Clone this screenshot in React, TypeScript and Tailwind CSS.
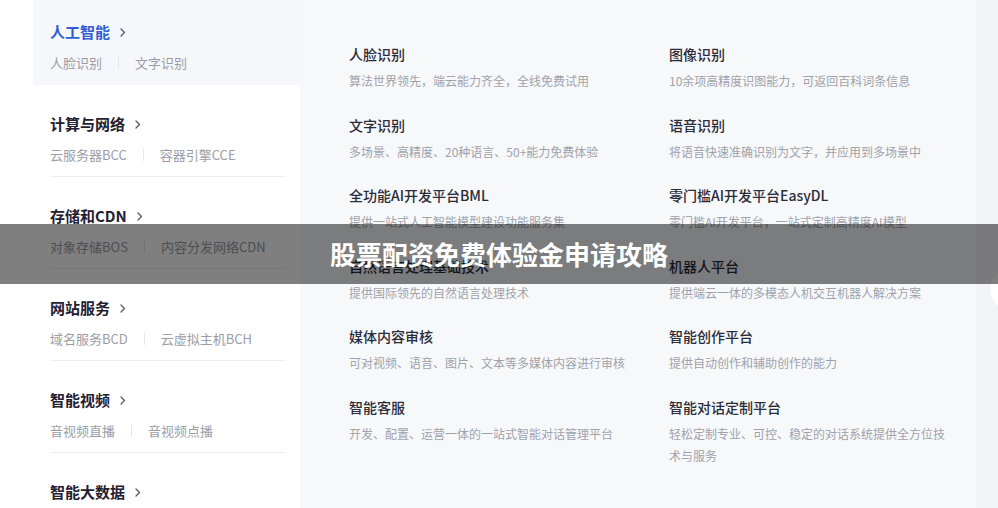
import { Fragment } from 'react';

type NavItem = { title: string; links: string[] };

const NAV: NavItem[] = [
  { title: '人工智能', links: ['人脸识别', '文字识别'] },
  { title: '计算与网络', links: ['云服务器BCC', '容器引擎CCE'] },
  { title: '存储和CDN', links: ['对象存储BOS', '内容分发网络CDN'] },
  { title: '网站服务', links: ['域名服务BCD', '云虚拟主机BCH'] },
  { title: '智能视频', links: ['音视频直播', '音视频点播'] },
  { title: '智能大数据', links: [] },
];

const PRODUCTS: { name: string; desc: string }[] = [
  { name: '人脸识别', desc: '算法世界领先，端云能力齐全，全线免费试用' },
  { name: '图像识别', desc: '10余项高精度识图能力，可返回百科词条信息' },
  { name: '文字识别', desc: '多场景、高精度、20种语言、50+能力免费体验' },
  { name: '语音识别', desc: '将语音快速准确识别为文字，并应用到多场景中' },
  { name: '全功能AI开发平台BML', desc: '提供一站式人工智能模型建设功能服务集' },
  { name: '零门槛AI开发平台EasyDL', desc: '零门槛AI开发平台，一站式定制高精度AI模型' },
  { name: '自然语言处理基础技术', desc: '提供国际领先的自然语言处理技术' },
  { name: '机器人平台', desc: '提供端云一体的多模态人机交互机器人解决方案' },
  { name: '媒体内容审核', desc: '可对视频、语音、图片、文本等多媒体内容进行审核' },
  { name: '智能创作平台', desc: '提供自动创作和辅助创作的能力' },
  { name: '智能客服', desc: '开发、配置、运营一体的一站式智能对话管理平台' },
  { name: '智能对话定制平台', desc: '轻松定制专业、可控、稳定的对话系统提供全方位技术与服务' },
];

function Chevron() {
  return (
    <svg width="6" height="9" viewBox="0 0 6 9" fill="none" className="ml-[10px] mt-[1px]">
      <path d="M1 1l3.5 3.5L1 8" stroke="#555866" strokeWidth="1.3" strokeLinecap="round" strokeLinejoin="round" />
    </svg>
  );
}

export default function App() {
  return (
    <div
      className="relative flex h-[508px] w-[998px] overflow-hidden bg-white"
      style={{ fontFamily: '"Noto Sans CJK SC", "Noto Sans", sans-serif' }}
    >
      {/* Left category nav */}
      <div className="ml-[33px] -mt-[7px] w-[267px] shrink-0">
        {NAV.map((item, i) => (
          <div key={item.title} className={i === 0 ? 'bg-[#f6f7fa] pl-[17px] pr-[15px]' : 'pl-[17px] pr-[15px]'}>
            <div className={`h-[92px] pt-[29px] ${i === 0 ? '' : 'border-b border-[#eceef2]'}`}>
              <div className="flex h-5 items-center">
                <span
                  className={`text-[15px] font-bold leading-5 ${i === 0 ? 'text-[#2f5fd3]' : 'text-[#1f2032]'}`}
                >
                  {item.title}
                </span>
                <Chevron />
              </div>
              {item.links.length > 0 && (
                <div className="mt-3 flex h-[18px] items-center text-[13px] leading-[18px] text-[#9b9da6]">
                  {item.links.map((l, j) => (
                    <Fragment key={l}>
                      {j > 0 && <span className="mx-4 h-3 w-px bg-[#e3e5ea]" />}
                      <span>{l}</span>
                    </Fragment>
                  ))}
                </div>
              )}
            </div>
          </div>
        ))}
      </div>

      {/* Product panel */}
      <div className="w-[676px] shrink-0 bg-[#f7f8fa] pl-[49px] pt-[44px]">
        <div className="grid grid-cols-[320px_320px] gap-y-[22.6px]">
          {PRODUCTS.map((p) => (
            <div key={p.name} className="w-[280px]">
              <div className="text-[14px] font-medium leading-5 text-[#2a2c3a]">{p.name}</div>
              <div className="mt-[6px] text-[12px] leading-[22px] text-[#a0a2aa]">{p.desc}</div>
            </div>
          ))}
        </div>
      </div>

      <div className="flex-1 bg-[#f2f3f7]" />

      {/* partial round button at the edge */}
      <div className="absolute left-[990px] top-[268px] h-[42px] w-[42px] rounded-full bg-white" />

      {/* title banner */}
      <div className="absolute left-0 top-[224px] flex h-[60px] w-full items-center justify-center bg-black/50">
        <span className="text-[26px] font-bold leading-none text-white">股票配资免费体验金申请攻略</span>
      </div>
    </div>
  );
}
